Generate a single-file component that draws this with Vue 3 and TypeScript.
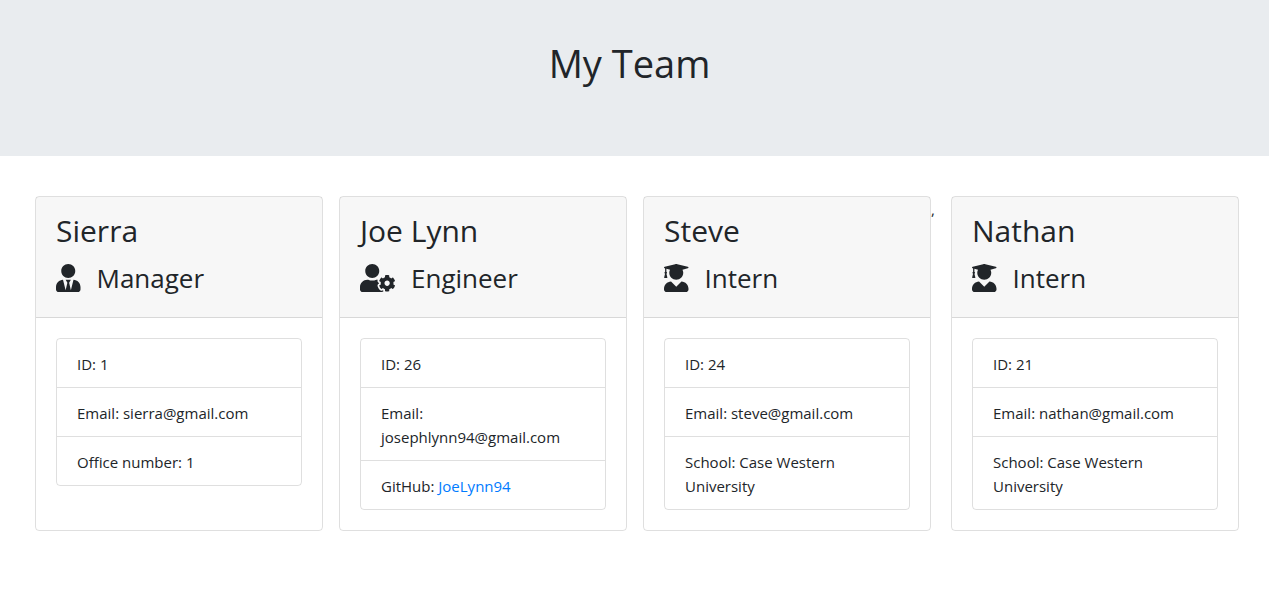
<script setup lang="ts">
type Role = 'Manager' | 'Engineer' | 'Intern'

interface Detail {
  text: string
  link?: { label: string; href: string }
}

interface Member {
  name: string
  role: Role
  details: Detail[]
  trailing?: string
}

const icons: Record<Role, { width: number; path: string }> = {
  Manager: {
    width: 448,
    path: 'M224 256c70.7 0 128-57.3 128-128S294.7 0 224 0 96 57.3 96 128s57.3 128 128 128zm95.8 32.6L272 480l-32-136 32-56h-96l32 56-32 136-47.8-191.4C56.9 292 0 350.3 0 422.4V464c0 26.5 21.5 48 48 48h352c26.5 0 48-21.5 48-48v-41.6c0-72.1-56.9-130.4-128.2-133.8z',
  },
  Engineer: {
    width: 640,
    path: 'M610.5 373.3c2.6-14.1 2.6-28.5 0-42.6l25.8-14.9c3-1.7 4.3-5.2 3.3-8.5-6.7-21.6-18.2-41.2-33.2-57.4-2.3-2.5-6-3.1-9-1.4l-25.8 14.9c-10.9-9.3-23.4-16.5-36.9-21.3v-29.8c0-3.4-2.4-6.4-5.7-7.1-22.3-5-45-4.8-66.2 0-3.3.7-5.7 3.7-5.7 7.1v29.8c-13.5 4.8-26 12-36.9 21.3l-25.8-14.9c-2.9-1.7-6.7-1.1-9 1.4-15 16.2-26.5 35.8-33.2 57.4-1 3.3.4 6.8 3.3 8.5l25.8 14.9c-2.6 14.1-2.6 28.5 0 42.6l-25.8 14.9c-3 1.7-4.3 5.2-3.3 8.5 6.7 21.6 18.2 41.1 33.2 57.4 2.3 2.5 6 3.1 9 1.4l25.8-14.9c10.9 9.3 23.4 16.5 36.9 21.3v29.8c0 3.4 2.4 6.4 5.7 7.1 22.3 5 45 4.8 66.2 0 3.3-.7 5.7-3.7 5.7-7.1v-29.8c13.5-4.8 26-12 36.9-21.3l25.8 14.9c2.9 1.7 6.7 1.1 9-1.4 15-16.2 26.5-35.8 33.2-57.4 1-3.3-.4-6.8-3.3-8.5l-25.8-14.9zM496 400.5c-26.8 0-48.5-21.8-48.5-48.5s21.8-48.5 48.5-48.5 48.5 21.8 48.5 48.5-21.7 48.5-48.5 48.5zM224 256c70.7 0 128-57.3 128-128S294.7 0 224 0 96 57.3 96 128s57.3 128 128 128zm201.2 226.5c-2.3-1.2-4.6-2.6-6.8-3.9l-7.9 4.6c-6 3.4-12.8 5.3-19.6 5.3-10.9 0-21.4-4.6-28.9-12.6-18.3-19.8-32.3-43.9-40.2-69.6-5.5-17.7 1.9-36.4 17.9-45.7l7.9-4.6c-.1-2.6-.1-5.2 0-7.8l-7.9-4.6c-16-9.2-23.4-28-17.9-45.7.9-2.9 2.2-5.8 3.2-8.7-3.8-.3-7.5-1.2-11.4-1.2h-16.7c-22.2 10.2-46.9 16-72.9 16s-50.6-5.8-72.9-16h-16.7C60.2 288 0 348.2 0 422.4V464c0 26.5 21.5 48 48 48h352c10.1 0 19.5-3.2 27.2-8.5-1.2-3.8-2-7.7-2-11.8v-9.2z',
  },
  Intern: {
    width: 448,
    path: 'M319.4 320.6L224 416l-95.4-95.4C57.1 323.7 0 382.2 0 454.4v9.6c0 26.5 21.5 48 48 48h352c26.5 0 48-21.5 48-48v-9.6c0-72.2-57.1-130.7-128.6-133.8zM13.6 79.8l6.4 1.5v58.4c-7 4.2-12 11.5-12 20.3 0 8.4 4.6 15.4 11.1 19.7L3.5 242c-1.7 6.9 2.1 14 7.6 14h41.8c5.5 0 9.3-7.1 7.6-14l-15.6-62.3C51.4 175.4 56 168.4 56 160c0-8.8-5-16.1-12-20.3V87.1l66 15.9c-8.6 17.2-14 36.4-14 57 0 70.7 57.3 128 128 128s128-57.3 128-128c0-20.6-5.3-39.8-14-57l96.3-23.2c18.2-4.4 18.2-27.1 0-31.5l-190.4-46c-13-3.1-26.7-3.1-39.7 0L13.6 48.2c-18.1 4.4-18.1 27.2 0 31.6z',
  },
}

const members: Member[] = [
  {
    name: 'Sierra',
    role: 'Manager',
    details: [
      { text: 'ID: 1' },
      { text: 'Email: sierra@gmail.com' },
      { text: 'Office number: 1' },
    ],
  },
  {
    name: 'Joe Lynn',
    role: 'Engineer',
    details: [
      { text: 'ID: 26' },
      { text: 'Email: josephlynn94@gmail.com' },
      { text: 'GitHub: ', link: { label: 'JoeLynn94', href: 'https://github.com/JoeLynn94' } },
    ],
  },
  {
    name: 'Steve',
    role: 'Intern',
    trailing: ',',
    details: [
      { text: 'ID: 24' },
      { text: 'Email: steve@gmail.com' },
      { text: 'School: Case Western University' },
    ],
  },
  {
    name: 'Nathan',
    role: 'Intern',
    details: [
      { text: 'ID: 21' },
      { text: 'Email: nathan@gmail.com' },
      { text: 'School: Case Western University' },
    ],
  },
]
</script>

<template>
  <header class="banner">
    <h1>My Team</h1>
  </header>
  <main class="team">
    <template v-for="member in members" :key="member.name">
      <article class="card">
        <div class="card-header">
          <h2>{{ member.name }}</h2>
          <h3>
            <svg class="icon" :viewBox="`0 0 ${icons[member.role].width} 512`" aria-hidden="true">
              <path :d="icons[member.role].path" />
            </svg>
            <span>{{ member.role }}</span>
          </h3>
        </div>
        <div class="card-body">
          <ul>
            <li v-for="detail in member.details" :key="detail.text">{{ detail.text }}<a v-if="detail.link" :href="detail.link.href">{{ detail.link.label }}</a></li>
          </ul>
        </div>
      </article>
      <span v-if="member.trailing" class="separator">{{ member.trailing }}</span>
    </template>
  </main>
</template>

<style>
body {
  margin: 0;
  background: #fff;
  color: #212529;
  font-family: "Segoe UI", "Open Sans", "Noto Sans", sans-serif;
  font-size: 15px;
  line-height: 24px;
}
</style>

<style scoped>
* {
  box-sizing: border-box;
}

h1,
h2,
h3,
ul {
  margin: 0;
  font-weight: 400;
}

.banner {
  padding: 40px 26px 70px 16px;
  background: #e9ecef;
  text-align: center;
}

h1 {
  font-size: 38px;
  line-height: 46px;
}

.team {
  display: flex;
  flex-wrap: wrap;
  justify-content: center;
  row-gap: 16px;
  padding: 40px 30px 40px 19px;
}

.card {
  display: flex;
  flex-direction: column;
  width: 288px;
  margin-left: 16px;
  border: 1px solid rgba(0, 0, 0, 0.125);
  border-radius: 4px;
}

.card-header {
  padding: 12px 20px 20px;
  background: rgba(0, 0, 0, 0.03);
  border-bottom: 1px solid rgba(0, 0, 0, 0.125);
}

h2 {
  margin-bottom: 6px;
  font-size: 30px;
  line-height: 44px;
}

h3 {
  display: flex;
  align-items: center;
  gap: 16px;
  font-size: 26px;
  line-height: 38px;
}

.icon {
  height: 28px;
  fill: currentColor;
}

.card-body {
  padding: 20px;
}

ul {
  padding: 0;
  list-style: none;
  border: 1px solid rgba(0, 0, 0, 0.125);
  border-radius: 4px;
}

li {
  padding: 13px 20px 11px;
}

li + li {
  border-top: 1px solid rgba(0, 0, 0, 0.125);
}

a {
  color: #007bff;
  text-decoration: none;
}

a:hover {
  text-decoration: underline;
}

.separator {
  width: 4px;
  padding-top: 1px;
}
</style>
